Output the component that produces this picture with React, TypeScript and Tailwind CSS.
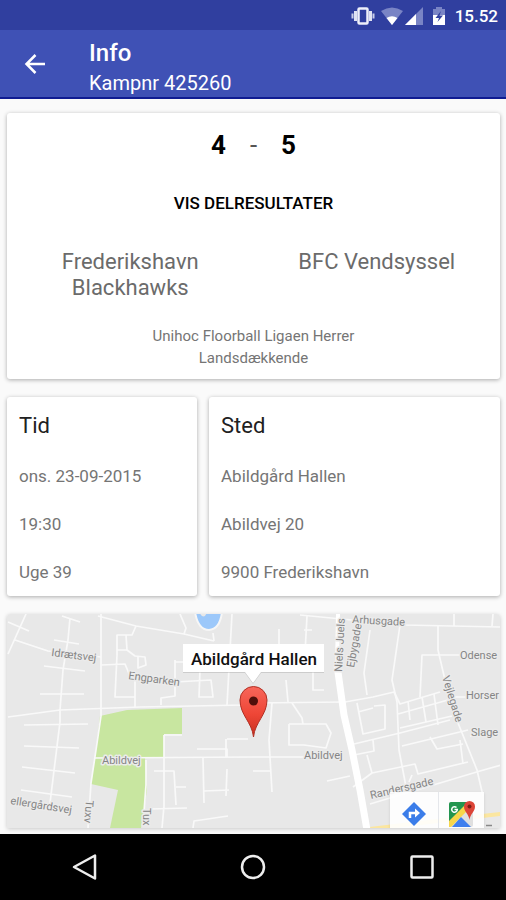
import type { ReactNode } from "react";

const TIME_ROWS = ["ons. 23-09-2015", "19:30", "Uge 39"];
const PLACE_ROWS = ["Abildgård Hallen", "Abildvej 20", "9900 Frederikshavn"];

// Small residential streets
const STREETS = [
  "M26 614 L8 654 M8 622 L29 631 M15 640 L48 651 L101 657",
  "M62 616 L80 622 M70 618 L68 640 L63 670 L60 710 L60 722 L50 803",
  "M54 640 L79 644 M44 666 L85 671 M40 694 L84 694",
  "M101 614 L101 716 L96 750 L91 783 L88 828",
  "M8 717 L60 710 L140 707 L244 705 L253 703 L345 702",
  "M98 616 L136 626 L184 634 L214 641",
  "M136 626 L132 635 L117 635 L117 655 L115 697 L135 697 M126 635 L127 650 L117 650 M127 650 L135 656 L145 657 L146 665 L138 668 L138 657 M101 665 L125 664 L130 676 L175 682 L211 680 L213 697 L199 697 L200 670",
  "M175 660 L175 696 L161 698 L161 705 M175 662 L188 662 M135 680 L135 707",
  "M180 614 L186 628 L184 634 M232 614 L227 705 M214 641 L213 633",
  "M24 725 L88 724 M24 746 L79 748 M22 767 L75 773 M21 790 L72 797",
  "M164 735 L164 806 L162 828 M146 760 L146 785 L144 812 M154 771 L174 771 L176 805 M176 787 L186 787 M150 809 L187 808",
  "M94 758 L253 757 L306 757 M164 735 L182 735 M197 749 L227 749 L227 757 M227 739 L248 739 M226 739 L226 757",
  "M203 758 L204 803 M204 791 L229 790 M227 769 L226 796 M193 828 L194 821 L228 816",
  "M253 771 L270 771 M272 703 L269 740 L272 792 M289 724 L289 745 L304 745",
  "M279 629 L279 653 M307 616 L304 672 M304 630 L312 630 M286 680 L288 702 M313 672 L313 690 L324 690",
  "M292 703 L302 718 L303 724 M289 724 L326 724 L331 733 L326 748 L304 745",
  "M300 615 L404 625 L501 627 M370 630 L364 673 L367 695 M400 625 L392 680 L397 702 L399 750 L407 792",
  "M345 702 L373 697 L394 692 L400 704 L440 692 M357 703 L363 734 L385 729 L385 705 L374 706 M358 712 L373 708",
  "M420 697 L422 655 L465 655 M398 714 L448 700 M400 728 L452 716 M402 746 L468 730 M408 701 L410 720 M422 697 L426 722 M434 694 L438 725 M430 737 L437 749 L463 744",
  "M354 744 L400 733 L450 720 M354 755 L374 751 L373 740 M367 755 L372 773 L353 787 M372 773 L415 764 L418 774 L468 762",
  "M409 782 L412 775 M327 781 L350 776 M370 804 L480 771 L501 765",
  "M438 625 L438 650 L445 680 L456 718 L477 770 L483 796 M454 614 L454 626 M493 614 L492 626",
  "M455 697 L470 697 M470 736 L480 734 M460 740 L463 764",
];

const LABELS = [
  { text: "Idrætsvej", x: 51, y: 656, turn: 7 },
  { text: "Engparken", x: 128, y: 679, turn: 8 },
  { text: "Abildvej", x: 102, y: 764, turn: 0 },
  { text: "Abildvej", x: 304, y: 759, turn: 0 },
  { text: "ellergårdsvej", x: 10, y: 804, turn: 9 },
  { text: "Arhusgade", x: 352, y: 623, turn: 3 },
  { text: "Niels Juels", x: 342, y: 672, turn: -87 },
  { text: "Ejbygade", x: 354, y: 668, turn: -80 },
  { text: "Odense", x: 460, y: 659, turn: 0 },
  { text: "Horser", x: 466, y: 699, turn: 0 },
  { text: "Slage", x: 471, y: 736, turn: 0 },
  { text: "Vejlegade", x: 442, y: 677, turn: 73 },
  { text: "Randersgade", x: 371, y: 799, turn: -13 },
  { text: "Tuxv", x: 86, y: 800, turn: 95 },
  { text: "Tux", x: 143, y: 808, turn: 90 },
];

const Card = ({ className, children }: { className: string; children: ReactNode }) => (
  <section
    className={`rounded-[3px] bg-white shadow-[0_1px_4px_rgba(0,0,0,0.32)] ${className}`}
  >
    {children}
  </section>
);

const StatusBar = () => (
  <div className="flex h-[30px] items-center justify-end bg-[#303f9f] pt-0.5 pr-2 text-white">
    <svg width="24" height="20" viewBox="0 0 24 20" aria-hidden="true">
      <path d="M1.500 7.500v5M22.500 7.500v5" stroke="#c9cee9" strokeWidth="2" />
      <path d="M4.500 5v10M19.500 5v10" stroke="#dfe2f3" strokeWidth="3" />
      <rect x="7.500" y="2.500" width="9" height="15" rx="1" fill="none" stroke="#eef0fa" strokeWidth="2.500" />
    </svg>
    <svg className="ml-1.5" width="22" height="18" viewBox="0 0 22 18" aria-hidden="true">
      <path d="M0 4Q11 -3 22 4L11 18Z" fill="#7984c5" />
      <path d="M5.500 11Q11 7.500 16.500 11L11 18Z" fill="#fff" />
    </svg>
    <svg className="ml-0.5" width="18" height="18" viewBox="0 0 18 18" aria-hidden="true">
      <path d="M18 0V18H0Z" fill="#7984c5" />
      <path d="M11 7V18H0Z" fill="#fff" />
    </svg>
    <svg className="ml-2.5" width="12" height="18" viewBox="0 0 12 18" aria-hidden="true">
      <path d="M0 2h3V0h6v2h3v7H0Z" fill="#7984c5" />
      <path d="M0 8h12v10H0Z" fill="#fff" />
      <path d="M8 4L2.500 11H6L4.500 15L10 8.500H6.500Z" fill="#303f9f" />
    </svg>
    <span className="ml-2.5 text-[17px] leading-5 font-medium">15.52</span>
  </div>
);

const StreetMap = () => (
  <svg
    className="block h-full w-full"
    viewBox="7 614 493 214"
    preserveAspectRatio="xMidYMid slice"
    role="img"
    aria-label="Abildgård Hallen"
  >
    <defs>
      <linearGradient id="pin" x1="0" y1="0" x2="0" y2="1">
        <stop offset="0" stopColor="#f8665a" />
        <stop offset="0.55" stopColor="#ee4636" />
        <stop offset="1" stopColor="#c62f1f" />
      </linearGradient>
    </defs>
    <rect x="7" y="614" width="494" height="214" fill="#e8e8e8" />
    <path
      d="M100 716L127 710L182 708V734H164V758H145L147 790L141 828H110L118 790L91 784L96 750Z"
      fill="#c8e6a0"
    />
    <path d="M195 612Q198 630 209 630Q220 629 222 612Z" fill="#9cc8fa" stroke="#f6f6f6" strokeWidth="2" />
    <path d="M199 612Q204 621 207 612Z" fill="#e8e8e8" />
    <path d="M370 829L420 823L501 814" fill="none" stroke="#fbe6a0" strokeWidth="4" />
    <g fill="none" stroke="#f9f9f9" strokeWidth="1.700" strokeLinejoin="round">
      {STREETS.map((d) => (
        <path key={d} d={d} />
      ))}
    </g>
    <path d="M338 614L337 665" fill="none" stroke="#fff" strokeWidth="4" />
    <path
      d="M337 665L344 715L352 750L360 790L367 830"
      fill="none"
      stroke="#fff"
      strokeWidth="7"
    />
    <g
      fontSize="11"
      fill="#858585"
      stroke="#ebebeb"
      strokeWidth="3"
      strokeLinejoin="round"
      paintOrder="stroke"
    >
      {LABELS.map(({ text, x, y, turn }) => (
        <text key={`${text}-${x}`} x={x} y={y} transform={`rotate(${turn} ${x} ${y})`}>
          {text}
        </text>
      ))}
    </g>

    {/* Info window with its pin */}
    <path d="M183 644H324V672H261L253 683L245 672H183Z" fill="#999" opacity="0.35" transform="translate(0 1)" />
    <path d="M183 644H324V672H261L253 683L245 672H183Z" fill="#fff" />
    <text x="254" y="665" textAnchor="middle" fontSize="17" fontWeight="500" fill="#111">
      Abildgård Hallen
    </text>
    <path
      d="M253.500 737C252 722 240 715 240 700A13.500 13.500 0 0 1 267 700C267 715 255 722 253.500 737Z"
      fill="url(#pin)"
      stroke="#b03024"
      strokeWidth="1"
    />
    <circle cx="253.500" cy="701" r="4.500" fill="#4f0f0a" />
    <path d="M486 825.500h6" stroke="#888" strokeWidth="1.500" />
  </svg>
);

const MapCard = () => (
  <section className="relative min-h-[214px] flex-1 overflow-hidden rounded-t-[3px] shadow-[0_1px_4px_rgba(0,0,0,0.2)]">
    <div className="absolute inset-0">
      <StreetMap />
    </div>
    <div className="absolute right-4 bottom-0 flex h-9 overflow-hidden bg-white/90 shadow-sm">
      <a href="#directions" aria-label="Rutevejledning" className="flex w-12 justify-center pt-2.5">
        <svg width="24" height="24" viewBox="0 0 24 24" aria-hidden="true">
          <path d="M12 0L24 12L12 24L0 12Z" fill="#3b7de9" />
          <path d="M8 16V11H14" fill="none" stroke="#fff" strokeWidth="2.500" />
          <path d="M13 6.500L18 11L13 15.500Z" fill="#fff" />
        </svg>
      </a>
      <a href="#maps" aria-label="Google Maps" className="flex w-[46px] justify-center border-l border-gray-200 pt-2">
        <svg width="28" height="28" viewBox="0 0 28 28" aria-hidden="true">
          <rect x="1" y="2" width="24" height="25" rx="2" fill="#e0e0e0" />
          <path d="M1 4Q1 2 3 2H23L1 25Z" fill="#23954f" />
          <path d="M1 21L17 5L21 9L3 27H1Z" fill="#f7d64a" />
          <path d="M4 27L13 17L23 27Z" fill="#3f7fee" />
          <path d="M8.500 7.500A2.800 2.800 0 1 0 9.300 9.500H6.500" fill="none" stroke="#fff" strokeWidth="1.500" />
          <path d="M21.500 20C21 14 16 12 16 6.500A5.500 5.500 0 0 1 27 6.500C27 12 22 14 21.500 20Z" fill="#dc4437" />
          <circle cx="21.500" cy="6.500" r="2" fill="#7d1d14" />
        </svg>
      </a>
    </div>
  </section>
);

const DetailCard = ({ title, rows }: { title: string; rows: string[] }) => (
  <Card className="px-3 pt-[17px] pb-3">
    <h2 className="text-[22px] leading-6 text-[#212121]">{title}</h2>
    <ul className="mt-[26px] flex flex-col gap-6 text-[17px] leading-6 text-[#757575]">
      {rows.map((row) => (
        <li key={row}>{row}</li>
      ))}
    </ul>
  </Card>
);

const NavigationBar = () => (
  <nav className="grid h-[66px] grid-cols-3 bg-black text-[#eee]">
    <button aria-label="Tilbage" className="flex items-center justify-center">
      <svg width="28" height="28" viewBox="0 0 28 28" fill="none" stroke="currentColor" strokeWidth="2.500" aria-hidden="true">
        <path d="M25 2.500V25.500L4 14Z" strokeLinejoin="round" />
      </svg>
    </button>
    <button aria-label="Hjem" className="flex items-center justify-center">
      <svg width="28" height="28" viewBox="0 0 28 28" fill="none" stroke="currentColor" strokeWidth="2.500" aria-hidden="true">
        <circle cx="14" cy="14" r="11" />
      </svg>
    </button>
    <button aria-label="Seneste apps" className="flex items-center justify-center">
      <svg width="28" height="28" viewBox="0 0 28 28" fill="none" stroke="currentColor" strokeWidth="2.500" aria-hidden="true">
        <rect x="3.500" y="3.500" width="21" height="21" rx="1" />
      </svg>
    </button>
  </nav>
);

export default function App() {
  return (
    <div className="flex min-h-screen flex-col bg-[#fafafa] font-['Roboto',sans-serif]">
      <StatusBar />
      <header className="flex h-[69px] items-center border-b-2 border-[#101c92] bg-[#3f51b5] text-white">
        <button aria-label="Tilbage" className="ml-6 p-0">
          <svg width="22" height="22" viewBox="0 0 22 22" fill="none" stroke="currentColor" strokeWidth="2.500" aria-hidden="true">
            <path d="M21 11H3M11.500 2L2.500 11L11.500 20" />
          </svg>
        </button>
        <div className="ml-[43px] pt-1.5">
          <h1 className="text-2xl leading-8 font-medium">Info</h1>
          <p className="text-xl leading-7">Kampnr 425260</p>
        </div>
      </header>

      <main className="flex flex-1 flex-col pt-3.5 pr-1.5 pb-1.5 pl-[7px]">
        <Card className="flex flex-col items-center pt-4 pb-2.5 text-center">
          <p className="flex items-center gap-6 text-[26px] leading-8 font-bold text-black">
            <span>4</span>
            <span className="font-normal text-[#555]">-</span>
            <span>5</span>
          </p>
          <button className="mt-[30px] text-[17px] leading-6 font-medium text-black">
            VIS DELRESULTATER
          </button>
          <div className="mt-[34px] grid w-full grid-cols-2 text-[22px] leading-[26px] text-[#6b6b6b]">
            <p className="px-10">Frederikshavn Blackhawks</p>
            <p className="px-10">BFC Vendsyssel</p>
          </div>
          <p className="mt-6 text-[15px] leading-[22px] text-[#757575]">
            Unihoc Floorball Ligaen Herrer
            <br />
            Landsdækkende
          </p>
        </Card>

        <div className="my-[18px] grid grid-cols-[190fr_291fr] gap-3">
          <DetailCard title="Tid" rows={TIME_ROWS} />
          <DetailCard title="Sted" rows={PLACE_ROWS} />
        </div>

        <MapCard />
      </main>

      <NavigationBar />
    </div>
  );
}
